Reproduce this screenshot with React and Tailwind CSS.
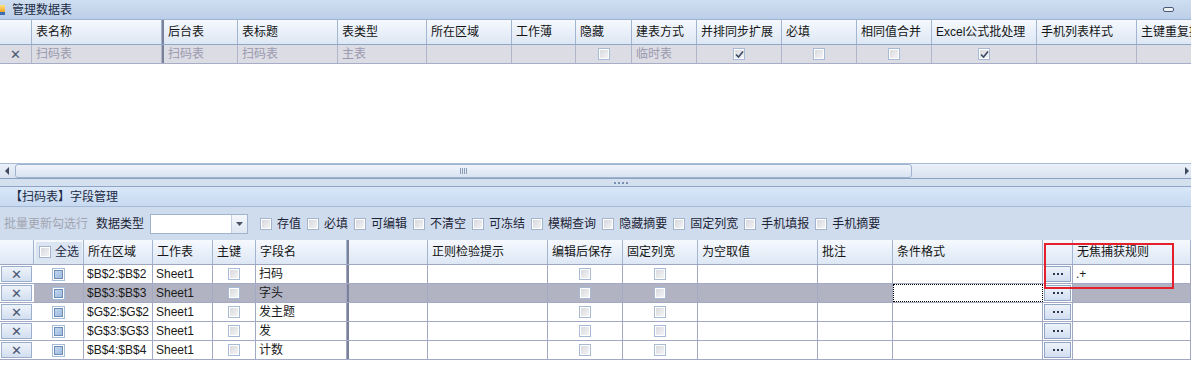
import React from "react";

const topCols = [
  { w: "w-[32px]", t: "" },
  { w: "w-[130px]", t: "表名称" },
  { w: "w-[2px]", sep: true },
  { w: "w-[74px]", t: "后台表" },
  { w: "w-[100px]", t: "表标题" },
  { w: "w-[89px]", t: "表类型" },
  { w: "w-[85px]", t: "所在区域" },
  { w: "w-[64px]", t: "工作薄" },
  { w: "w-[56px]", t: "隐藏" },
  { w: "w-[65px]", t: "建表方式" },
  { w: "w-[85px]", t: "并排同步扩展" },
  { w: "w-[75px]", t: "必填" },
  { w: "w-[75px]", t: "相同值合并" },
  { w: "w-[105px]", t: "Excel公式批处理" },
  { w: "w-[100px]", t: "手机列表样式" },
  { w: "w-[80px]", t: "主键重复提示" },
];

const topRow = [
  { k: "x" },
  { t: "扫码表" },
  { sep: true },
  { t: "扫码表" },
  { t: "扫码表" },
  { t: "主表" },
  { t: "" },
  { t: "" },
  { cb: false },
  { t: "临时表" },
  { cb: true },
  { cb: false },
  { cb: false },
  { cb: true },
  { t: "" },
  { t: "" },
];

const botCols = [
  { w: "w-[34px]", t: "" },
  { w: "w-[50px]", t: "全选", all: true },
  { w: "w-[69px]", t: "所在区域" },
  { w: "w-[60px]", t: "工作表" },
  { w: "w-[43px]", t: "主键" },
  { w: "w-[91px]", t: "字段名" },
  { w: "w-[2px]", sep: true },
  { w: "w-[79px]", t: "" },
  { w: "w-[120px]", t: "正则检验提示" },
  { w: "w-[75px]", t: "编辑后保存" },
  { w: "w-[75px]", t: "固定列宽" },
  { w: "w-[120px]", t: "为空取值" },
  { w: "w-[75px]", t: "批注" },
  { w: "w-[150px]", t: "条件格式" },
  { w: "w-[30px]", t: "" },
  { w: "w-[118px]", t: "无焦捕获规则" },
];

const rows = [
  { area: "$B$2:$B$2", name: "扫码", rule: ".+" },
  { area: "$B$3:$B$3", name: "字头", sel: true },
  { area: "$G$2:$G$2", name: "发主题" },
  { area: "$G$3:$G$3", name: "发" },
  { area: "$B$4:$B$4", name: "计数" },
];

const tools = ["存值", "必填", "可编辑", "不清空", "可冻结", "模糊查询", "隐藏摘要", "固定列宽", "手机填报", "手机摘要"];

function Check({ on }) {
  return (
    <div className="w-[12px] h-[12px] border border-[#a9bbd4] bg-white p-[1px] flex">
      <div className="flex-1 bg-linear-to-br from-[#d9dade] to-[#f4f4f6] flex items-center justify-center">
        {on && (
          <svg width="9" height="9" viewBox="0 0 9 9">
            <path d="M1 4.5 L3.5 7 L8 1.5" fill="none" stroke="#3c4a66" strokeWidth="1.6" />
          </svg>
        )}
      </div>
    </div>
  );
}

function BlueCheck() {
  return (
    <div className="w-[13px] h-[13px] border border-[#a5bcda] bg-white p-[1px] flex">
      <div className="flex-1 border border-[#6d8db7] bg-linear-to-br from-[#c4d8ef] to-[#9db9dd]" />
    </div>
  );
}

function SmallBox() {
  return (
    <div className="w-[12px] h-[12px] border border-[#a4b4cc] bg-white p-[1px] flex shrink-0">
      <div className="flex-1 bg-linear-to-br from-[#d6d8de] to-[#f2f3f5]" />
    </div>
  );
}

export default function App() {
  return (
    <div className="relative w-[1191px] h-[382px] overflow-hidden bg-white text-[12px] text-[#1b1b1b] font-['Liberation_Sans','Noto_Sans_CJK_SC',sans-serif] leading-none">
      {/* title bar */}
      <div className="h-[20px] flex items-center bg-linear-to-b from-[#cfdef1] to-[#bccfe8] border-b border-[#9cb3d2] relative">
        <div className="w-[5px] h-[10px] flex flex-col mr-[7px]">
          <div className="flex-1 bg-linear-to-b from-[#ffe27a] to-[#f0a418]" />
          <div className="h-[3px] bg-[#3d6db4]" />
        </div>
        <span className="text-[#1e2c46]">管理数据表</span>
        <div className="absolute right-[17px] top-[7px] w-[11px] h-[5px] border border-[#4b5870] rounded-[2px] bg-[#eef2f8]" />
      </div>

      {/* top grid header */}
      <div className="h-[25px] flex overflow-hidden border-b border-[#8fa6c6]">
        {topCols.map((c, i) =>
          c.sep ? (
            <div key={i} className={`${c.w} shrink-0 bg-[#7a8199]`} />
          ) : (
            <div
              key={i}
              className={`${c.w} shrink-0 h-full flex items-center pl-[4px] whitespace-nowrap overflow-hidden border-r border-[#a2b6d1] bg-linear-to-b from-[#f6f9fe] to-[#dde7f4] text-[#141414]`}
            >
              {c.t}
            </div>
          )
        )}
      </div>
      {/* top data row */}
      <div className="h-[19px] flex overflow-hidden border-b border-[#a7adc6] bg-[#dcdce4]">
        {topCols.map((c, i) => {
          const d = topRow[i];
          if (c.sep) return <div key={i} className={`${c.w} shrink-0 bg-[#7a8199]`} />;
          return (
            <div
              key={i}
              className={`${c.w} shrink-0 h-full flex items-center ${d.cb !== undefined || d.k ? "justify-center" : "pl-[4px]"} border-r border-[#b1b5cb] text-[#9b9aae] whitespace-nowrap overflow-hidden`}
            >
              {d.k ? <span className="text-[#4c5670] text-[13px]">✕</span> : d.cb !== undefined ? <Check on={d.cb} /> : d.t}
            </div>
          );
        })}
      </div>
      <div className="h-[99px]" />

      {/* horizontal scrollbar */}
      <div className="h-[16px] flex items-center border-t border-[#aabdd6] border-b border-b-[#8aa1c0] bg-linear-to-b from-[#eaf0f8] to-[#d8e2ef]">
        <div className="w-[15px] h-full flex items-center justify-center">
          <svg width="5" height="8" viewBox="0 0 5 8">
            <path d="M4 0 L0 4 L4 8 Z" fill="#3f4a60" />
          </svg>
        </div>
        <div className="w-[897px] h-[14px] rounded-[3px] border border-[#9fb3cf] bg-linear-to-b from-[#f1f5fb] to-[#d9e3f1] flex items-center justify-center">
          <div className="flex gap-[1px]">
            <div className="w-[1px] h-[6px] bg-[#8a9cb7]" />
            <div className="w-[1px] h-[6px] bg-[#8a9cb7]" />
            <div className="w-[1px] h-[6px] bg-[#8a9cb7]" />
            <div className="w-[1px] h-[6px] bg-[#8a9cb7]" />
          </div>
        </div>
        <div className="flex-1" />
        <div className="w-[10px] h-full flex items-center justify-center">
          <svg width="5" height="8" viewBox="0 0 5 8">
            <path d="M1 0 L5 4 L1 8 Z" fill="#3f4a60" />
          </svg>
        </div>
      </div>

      {/* splitter */}
      <div className="h-[8px] bg-[#d5e0ef] border-b border-[#8ea5c5] flex items-center pl-[614px]">
        <div className="flex gap-[2px]">
          <div className="w-[2px] h-[2px] bg-[#7890b2]" />
          <div className="w-[2px] h-[2px] bg-[#7890b2]" />
          <div className="w-[2px] h-[2px] bg-[#7890b2]" />
          <div className="w-[2px] h-[2px] bg-[#7890b2]" />
        </div>
      </div>

      {/* section header */}
      <div className="h-[20px] flex items-center pl-[10px] bg-linear-to-b from-[#d9e7f8] to-[#c7daf1] border-b border-[#a5bbd8] text-[#1e2b45]">
        【扫码表】字段管理
      </div>

      {/* toolbar */}
      <div className="h-[33px] flex items-center bg-[#cfdcee] pl-[4px] whitespace-nowrap">
        <span className="text-[#a1a5b0]">批量更新勾选行</span>
        <span className="ml-[8px] text-[#1e2536]">数据类型</span>
        <div className="ml-[6px] w-[98px] h-[20px] border border-[#9fb3cf] bg-white flex justify-end">
          <div className="w-[16px] h-full border-l border-[#c3cfe0] bg-linear-to-b from-[#f4f7fb] to-[#dfe7f2] flex items-center justify-center">
            <svg width="7" height="4" viewBox="0 0 7 4">
              <path d="M0 0 L7 0 L3.5 4 Z" fill="#4a5368" />
            </svg>
          </div>
        </div>
        <div className="flex items-center ml-[12px] gap-[6px]">
          {tools.map((t) => (
            <div key={t} className="flex items-center gap-[5px]">
              <SmallBox />
              <span className="text-[#1e2536]">{t}</span>
            </div>
          ))}
        </div>
      </div>

      {/* bottom grid header */}
      <div className="h-[25px] flex overflow-hidden border-b border-[#9ea6c2]">
        {botCols.map((c, i) =>
          c.sep ? (
            <div key={i} className={`${c.w} shrink-0 bg-[#7a8199]`} />
          ) : (
            <div
              key={i}
              className={`${c.w} shrink-0 h-full flex items-center ${c.all ? "pl-[2px]" : "pl-[4px]"} whitespace-nowrap overflow-hidden border-r border-[#a2b6d1] bg-linear-to-b from-[#f6f9fe] to-[#dde7f4] text-[#141414]`}
            >
              {c.all ? (
                <div className="w-[46px] h-[21px] bg-[#dbe5f2] flex items-center pl-[3px] gap-[4px] text-[#1e2b45]">
                  <SmallBox />
                  全选
                </div>
              ) : (
                c.t
              )}
            </div>
          )
        )}
      </div>

      {/* bottom rows */}
      {rows.map((r, ri) => (
        <div key={ri} className={`h-[19px] flex overflow-hidden border-b border-[#a3a9c4] ${r.sel ? "bg-[#b1b3c2]" : "bg-white"}`}>
          {botCols.map((c, i) => {
            if (c.sep) return <div key={i} className={`${c.w} shrink-0 bg-[#7a8199]`} />;
            let content = null;
            let cls = "pl-[3px]";
            if (i === 0) {
              return (
                <div key={i} className={`${c.w} shrink-0 h-full p-[1px] pr-[2px] bg-white`}>
                  <div className="w-full h-full border border-[#9aafcb] bg-linear-to-b from-[#eef3fa] to-[#d3dff0] flex items-center justify-center text-[#4a5572] text-[13px]">
                    ✕
                  </div>
                </div>
              );
            }
            if (i === 1) {
              content = <BlueCheck />;
              cls = "justify-center";
            } else if (i === 2) content = r.area;
            else if (i === 3) content = "Sheet1";
            else if (i === 4 || i === 9 || i === 10) {
              content = <Check on={false} />;
              cls = "justify-center";
            } else if (i === 5) content = r.name;
            else if (i === 15) content = r.rule || "";
            if (i === 13 && r.sel) {
              return (
                <div key={i} className={`${c.w} shrink-0 h-full bg-white border border-dotted border-black`} />
              );
            }
            if (i === 14) {
              return (
                <div key={i} className={`${c.w} shrink-0 h-full p-[1px] bg-white border-r border-[#a3a9c4]`}>
                  <div className="w-full h-full border border-[#8fa6c6] bg-linear-to-b from-[#eef3fa] to-[#d2def0] flex items-center justify-center gap-[2px]">
                    <div className="w-[2px] h-[2px] bg-[#2e3850]" />
                    <div className="w-[2px] h-[2px] bg-[#2e3850]" />
                    <div className="w-[2px] h-[2px] bg-[#2e3850]" />
                  </div>
                </div>
              );
            }
            return (
              <div key={i} className={`${c.w} shrink-0 h-full flex items-center ${cls} border-r border-[#a3a9c4] whitespace-nowrap overflow-hidden`}>
                {content}
              </div>
            );
          })}
        </div>
      ))}

      {/* red highlight */}
      <div className="absolute left-[1044px] top-[243px] w-[130px] h-[46px] border-2 border-[#e3202c] pointer-events-none" />
    </div>
  );
}
